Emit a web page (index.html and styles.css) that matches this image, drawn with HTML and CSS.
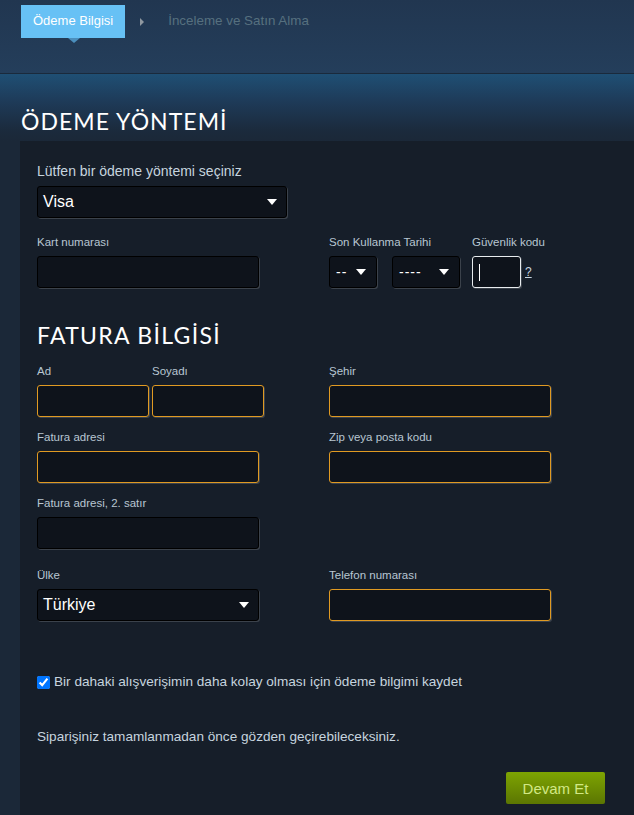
FILE: index.html
```html
<!DOCTYPE html>
<html lang="tr">
<head>
  <meta charset="UTF-8" />
  <meta name="viewport" content="width=device-width, initial-scale=1.0"/>
  <title>Ödeme Bilgisi</title>
  <link rel="stylesheet" href="styles.css">
</head>
<body>
  <header class="steps">
    <div class="step active">Ödeme Bilgisi</div>
    <span class="step-arrow"></span>
    <div class="step">İnceleme ve Satın Alma</div>
  </header>

  <div class="hero">
    <h1 class="page-title">ÖDEME YÖNTEMİ</h1>
  </div>

  <main class="panel">
    <div class="intro-label">Lütfen bir ödeme yöntemi seçiniz</div>
    <div class="select select-method">
      <span>Visa</span>
      <span class="caret-down"></span>
    </div>

    <div class="row row-card">
      <div class="field">
        <label class="field-label">Kart numarası</label>
        <div class="input w-full"></div>
      </div>
      <div class="expiry-group">
        <div class="field">
          <label class="field-label">Son Kullanma Tarihi</label>
          <div class="dates">
            <div class="select select-small month"><span>--</span><span class="caret-down"></span></div>
            <div class="select select-small year"><span>----</span><span class="caret-down"></span></div>
          </div>
        </div>
        <div class="field">
          <label class="field-label">Güvenlik kodu</label>
          <div class="cvv-wrap">
            <div class="input cvv focused"><span class="text-caret"></span></div>
            <a class="help-link">?</a>
          </div>
        </div>
      </div>
    </div>

    <h2 class="section-title">FATURA BİLGİSİ</h2>

    <div class="row">
      <div class="name-pair">
        <div class="field">
          <label class="field-label">Ad</label>
          <div class="input w-half warn"></div>
        </div>
        <div class="field">
          <label class="field-label">Soyadı</label>
          <div class="input w-half warn"></div>
        </div>
      </div>
      <div class="field">
        <label class="field-label">Şehir</label>
        <div class="input w-full warn"></div>
      </div>
    </div>

    <div class="row">
      <div class="field">
        <label class="field-label">Fatura adresi</label>
        <div class="input w-full warn"></div>
      </div>
      <div class="field">
        <label class="field-label">Zip veya posta kodu</label>
        <div class="input w-full warn"></div>
      </div>
    </div>

    <div class="row">
      <div class="field">
        <label class="field-label">Fatura adresi, 2. satır</label>
        <div class="input w-full"></div>
      </div>
    </div>

    <div class="row row-country">
      <div class="field">
        <label class="field-label">Ülke</label>
        <div class="select select-country"><span>Türkiye</span><span class="caret-down"></span></div>
      </div>
      <div class="field">
        <label class="field-label">Telefon numarası</label>
        <div class="input w-full warn"></div>
      </div>
    </div>

    <label class="save-info">
      <input type="checkbox" checked>
      <span>Bir dahaki alışverişimin daha kolay olması için ödeme bilgimi kaydet</span>
    </label>

    <p class="review-note">Siparişiniz tamamlanmadan önce gözden geçirebileceksiniz.</p>

    <div class="actions">
      <button type="button" class="btn-green">Devam Et</button>
    </div>
  </main>
</body>
</html>
```

FILE: styles.css
```css
body {
  margin: 0;
  background-color: #1b2838;
  font-family: 'Liberation Sans', Arial, sans-serif;
  color: #c6d4df;
  overflow: hidden;
}

/* top step bar */
.steps {
  height: 74px;
  box-sizing: border-box;
  padding: 5px 0 0 21px;
  display: flex;
  align-items: flex-start;
  background: linear-gradient(to bottom, #213650 0%, #243e5b 100%);
  border-bottom: 1px solid #1a2a3c;
}
.step {
  height: 33px;
  line-height: 32px;
  font-size: 13.4px;
  color: #56707f;
}
.step.active {
  position: relative;
  background-color: #67c1f5;
  color: #fff;
  font-size: 13px;
  padding: 0 12px;
}
.step.active::after {
  content: "";
  position: absolute;
  left: 47px;
  top: 33px;
  border-left: 6px solid transparent;
  border-right: 6px solid transparent;
  border-top: 5px solid #4b8fbd;
}
.step-arrow {
  width: 0;
  height: 0;
  margin: 13px 24px 0 15px;
  border-top: 4px solid transparent;
  border-bottom: 4px solid transparent;
  border-left: 4px solid #8f98a0;
}

/* title band */
.hero {
  height: 67px;
  box-sizing: border-box;
  padding: 33px 0 0 21px;
  background: linear-gradient(to bottom, #1f4f74 0%, #1e3b59 40%, #1b2a3c 85%, #1b2838 100%);
}
.page-title, .section-title {
  margin: 0;
  font-family: Lato, 'Liberation Sans', sans-serif;
  font-weight: 400;
  font-size: 23px;
  line-height: 28px;
  letter-spacing: 1.05px;
  color: #fff;
}

/* form panel */
.panel {
  margin-left: 20px;
  min-height: 700px;
  padding: 21px 29px 0 17px;
  background-color: #161e29;
}
.intro-label {
  font-size: 14px;
  line-height: 18px;
  margin-bottom: 6px;
}
.row {
  display: grid;
  grid-template-columns: 292px 1fr;
  margin-bottom: 13px;
}
.row-card {
  margin-top: 17px;
}
.row-country {
  margin-top: 19px;
}
.field {
  display: flex;
  flex-direction: column;
}
.field-label {
  font-size: 11.5px;
  line-height: 14px;
  margin-bottom: 7px;
  color: #b8c6d2;
}
.input, .select {
  height: 32px;
  box-sizing: border-box;
  background-color: #0e131b;
  border: 1px solid #000;
  border-radius: 3px;
  box-shadow: 1px 1px 0 rgba(255,255,255,0.16);
}
.w-full { width: 222px; }
.w-half { width: 112px; }
.input.warn { border-color: #e09a22; }
.input.focused { border-color: #e8ecef; }

.select {
  display: flex;
  align-items: center;
  justify-content: space-between;
  padding: 0 9px 0 5px;
  font-size: 16px;
  color: #fff;
}
.select-method { width: 250px; }
.select-country { width: 222px; }
.caret-down {
  width: 0;
  height: 0;
  border-left: 5px solid transparent;
  border-right: 5px solid transparent;
  border-top: 6px solid #fff;
}

.expiry-group {
  display: flex;
  gap: 12px;
}
.dates {
  display: flex;
  gap: 15px;
}
.select-small {
  font-size: 14px;
  letter-spacing: 1px;
  padding: 0 10px 0 6px;
}
.select-small.month { width: 48px; }
.select-small.year { width: 68px; }
.cvv-wrap {
  display: flex;
  align-items: center;
  gap: 4px;
}
.cvv {
  width: 49px;
  display: flex;
  align-items: center;
  padding-left: 6px;
}
.text-caret {
  width: 1px;
  height: 17px;
  background-color: #fff;
}
.help-link {
  font-size: 12px;
  color: #c6d4df;
  text-decoration: underline;
}

.section-title {
  margin: 33px 0 15px;
  letter-spacing: 1.3px;
}
.name-pair {
  display: flex;
  gap: 3px;
}

.save-info {
  display: flex;
  align-items: center;
  margin-top: 52px;
  font-size: 13.6px;
  line-height: 18px;
}
.save-info input {
  width: 13px;
  height: 13px;
  margin: 0 4px 0 0;
}
.review-note {
  margin: 37px 0 0;
  font-size: 13.6px;
  line-height: 18px;
}
.actions {
  display: flex;
  justify-content: flex-end;
  margin-top: 26px;
}
.btn-green {
  width: 99px;
  height: 32px;
  border: none;
  border-radius: 2px;
  background: linear-gradient(to bottom, #7ea402 0%, #5b7602 100%);
  color: #d2e885;
  font-family: 'Liberation Sans', Arial, sans-serif;
  font-size: 15px;
  cursor: pointer;
}
```
